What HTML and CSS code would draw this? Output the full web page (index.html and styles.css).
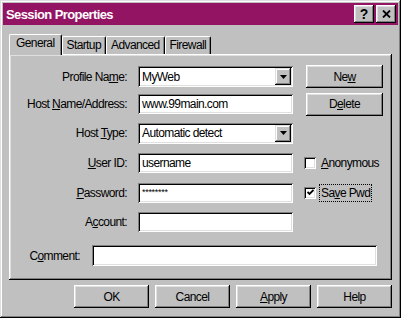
FILE: index.html
```html
<!DOCTYPE html>
<html lang="en">
<head>
    <meta charset="UTF-8">
    <title>Session Properties</title>
    <link rel="stylesheet" href="styles.css">
</head>
<body>
    <div class="window">
        <!-- Title bar -->
        <div class="titlebar">
            <span class="title">Session Properties</span>
            <div class="title-buttons">
                <div class="tbtn">?</div>
                <div class="tbtn">
                    <svg width="9" height="8" viewBox="0 0 9 8"><path d="M1 0.5 L8 7.5 M8 0.5 L1 7.5" stroke="#000" stroke-width="1.8"/></svg>
                </div>
            </div>
        </div>

        <!-- Tabs -->
        <div class="tabs">
            <div class="tab active">General</div>
            <div class="tab">Startup</div>
            <div class="tab">Advanced</div>
            <div class="tab">Firewall</div>
        </div>

        <div class="panel">
            <div class="form-grid">
                <div class="label">Profile Na<u>m</u>e:</div>
                <div class="field combo">
                    <span class="value">MyWeb</span>
                    <div class="drop"><svg width="7" height="4" viewBox="0 0 7 4"><polygon points="0,0 7,0 3.5,4" fill="#000"/></svg></div>
                </div>
                <div class="btn side">Ne<u>w</u></div>

                <div class="label">Host <u>N</u>ame/Address:</div>
                <div class="field"><span class="value">www.99main.com</span></div>
                <div class="btn side">D<u>e</u>lete</div>

                <div class="label">Host <u>T</u>ype:</div>
                <div class="field combo">
                    <span class="value">Automatic detect</span>
                    <div class="drop"><svg width="7" height="4" viewBox="0 0 7 4"><polygon points="0,0 7,0 3.5,4" fill="#000"/></svg></div>
                </div>
                <div></div>

                <div class="label"><u>U</u>ser ID:</div>
                <div class="field"><span class="value">username</span></div>
                <div class="check">
                    <div class="box"></div>
                    <span class="check-label"><u>A</u>nonymous</span>
                </div>

                <div class="label"><u>P</u>assword:</div>
                <div class="field"><span class="value stars">********</span></div>
                <div class="check">
                    <div class="box"><svg width="7" height="7" viewBox="0 0 7 7"><path d="M0.5 3 L2.5 5 L6.5 1" fill="none" stroke="#000" stroke-width="1.8"/></svg></div>
                    <span class="check-label focus">Sa<u>v</u>e Pwd</span>
                </div>

                <div class="label">A<u>c</u>count:</div>
                <div class="field"></div>
                <div></div>
            </div>

            <div class="comment-row">
                <div class="label comment">C<u>o</u>mment:</div>
                <div class="field wide"></div>
            </div>
        </div>

        <!-- Bottom buttons -->
        <div class="actions">
            <div class="btn">OK</div>
            <div class="btn">Cancel</div>
            <div class="btn"><u>A</u>pply</div>
            <div class="btn">Help</div>
        </div>
    </div>
</body>
</html>
```

FILE: styles.css
```css
body {
    margin: 0;
    background-color: #c0c0c0;
    font-family: "Liberation Sans", Arial, sans-serif;
    font-size: 12px;
    letter-spacing: -0.6px;
    color: #000;
}

u {
    text-decoration: underline;
    text-underline-offset: 1px;
}

.window {
    width: 401px;
    height: 318px;
    box-sizing: border-box;
    padding: 3px;
    display: flex;
    flex-direction: column;
    background-color: #c0c0c0;
    box-shadow: inset -1px -1px #000, inset 1px 1px #dfdfdf, inset -2px -2px #808080, inset 2px 2px #fff;
}

/* Barra de titulo */
.titlebar {
    height: 22px;
    flex: none;
    display: flex;
    align-items: center;
    justify-content: space-between;
    padding: 0 2px 0 3px;
    background-color: #941464;
    color: #fff;
}

.title {
    font-weight: bold;
    font-size: 13px;
    letter-spacing: -0.6px;
}

.title-buttons {
    display: flex;
    gap: 2px;
}

.tbtn {
    width: 20px;
    height: 18px;
    display: flex;
    align-items: center;
    justify-content: center;
    background-color: #c0c0c0;
    color: #000;
    font-weight: bold;
    font-size: 14px;
    letter-spacing: 0;
    box-shadow: inset -1px -1px #000, inset 1px 1px #fff, inset -2px -2px #808080, inset 2px 2px #dfdfdf;
}

/* Tabs */
.tabs {
    height: 21px;
    flex: none;
    display: flex;
    align-items: flex-end;
    margin: 9px 6px 0;
}

.tab {
    height: 19px;
    box-sizing: border-box;
    padding: 1px 4px 0 4px;
    line-height: 14px;
    border-top: 1px solid #fff;
    border-left: 1px solid #fff;
    border-right: 1px solid #000;
    border-radius: 2px 2px 0 0;
    box-shadow: inset -1px 0 #808080;
}

.tab.active {
    height: 21px;
    padding: 1px 6px 0 6px;
    position: relative;
    z-index: 1;
    background-color: #c0c0c0;
}

.panel {
    height: 226px;
    flex: none;
    box-sizing: border-box;
    margin: -1px 6px 0;
    padding-top: 9px;
    box-shadow: inset -1px -1px #000, inset 1px 1px #fff, inset -2px -2px #808080, inset 2px 2px #dfdfdf;
}

.form-grid {
    display: grid;
    grid-template-columns: 118px 155px 90px;
    grid-template-rows: 27px 28px 30px 30px 29px 29px;
    column-gap: 11px;
    align-items: center;
}

.label {
    text-align: right;
    white-space: nowrap;
}

/* Campos */
.field {
    height: 20px;
    box-sizing: border-box;
    display: flex;
    align-items: center;
    padding: 2px;
    background-color: #fff;
    box-shadow: inset 1px 1px #808080, inset -1px -1px #fff, inset 2px 2px #000, inset -2px -2px #dfdfdf;
}

.field.combo {
    height: 21px;
}

.value {
    padding-left: 2px;
    white-space: nowrap;
}

.value.stars {
    font-size: 9px;
    letter-spacing: -0.3px;
    align-self: flex-start;
    padding-top: 2px;
}

.drop {
    margin-left: auto;
    width: 16px;
    height: 17px;
    display: flex;
    align-items: center;
    justify-content: center;
    background-color: #c0c0c0;
    box-shadow: inset -1px -1px #000, inset 1px 1px #dfdfdf, inset -2px -2px #808080, inset 2px 2px #fff;
}

.btn {
    width: 75px;
    height: 23px;
    box-sizing: border-box;
    display: flex;
    align-items: center;
    justify-content: center;
    background-color: #c0c0c0;
    box-shadow: inset -1px -1px #000, inset 1px 1px #fff, inset -2px -2px #808080, inset 2px 2px #dfdfdf;
}

.btn.side {
    width: 77px;
    margin-left: 2px;
}

/* Checkboxes */
.check {
    display: flex;
    align-items: center;
}

.box {
    width: 12px;
    height: 12px;
    box-sizing: border-box;
    display: flex;
    align-items: center;
    justify-content: center;
    background-color: #fff;
    box-shadow: inset 1px 1px #808080, inset -1px -1px #fff, inset 2px 2px #000, inset -2px -2px #dfdfdf;
}

.check-label {
    margin-left: 4px;
    padding: 1px 1px;
}

.check-label.focus {
    outline: 1px dotted #000;
}

.comment-row {
    display: flex;
    align-items: center;
    margin-top: 9px;
}

.label.comment {
    width: 71px;
}

.field.wide {
    width: 285px;
    height: 21px;
    margin-left: 12px;
}

/* Botoes do rodape */
.actions {
    display: flex;
    justify-content: flex-end;
    gap: 6px;
    margin: 5px 6px 0;
}
```
